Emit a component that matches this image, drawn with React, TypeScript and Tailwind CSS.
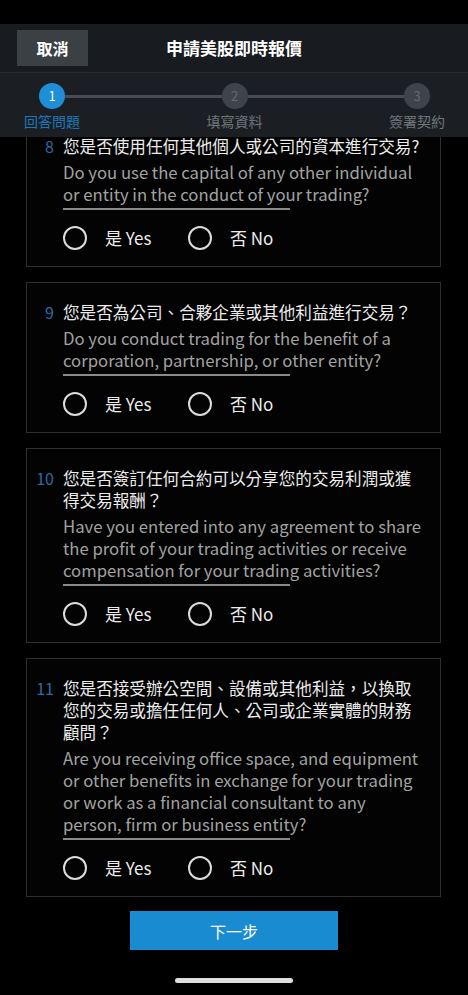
import React from "react";

const font = { fontFamily: '"Noto Sans CJK TC", "Noto Sans", sans-serif' };

type Q = { n: string; zh: string[]; en: string[] };

const questions: Q[] = [
  {
    n: "8",
    zh: ["您是否使用任何其他個人或公司的資本進行交易?"],
    en: ["Do you use the capital of any other individual", "or entity in the conduct of your trading?"],
  },
  {
    n: "9",
    zh: ["您是否為公司、合夥企業或其他利益進行交易？"],
    en: ["Do you conduct trading for the benefit of a", "corporation, partnership, or other entity?"],
  },
  {
    n: "10",
    zh: ["您是否簽訂任何合約可以分享您的交易利潤或獲", "得交易報酬？"],
    en: [
      "Have you entered into any agreement to share",
      "the profit of your trading activities or receive",
      "compensation for your trading activities?",
    ],
  },
  {
    n: "11",
    zh: ["您是否接受辦公空間、設備或其他利益，以換取", "您的交易或擔任任何人、公司或企業實體的財務", "顧問？"],
    en: [
      "Are you receiving office space, and equipment",
      "or other benefits in exchange for your trading",
      "or work as a financial consultant to any",
      "person, firm or business entity?",
    ],
  },
];

function Radio({ label }: { label: string }) {
  return (
    <div className="flex items-center">
      <div className="h-[24px] w-[24px] rounded-full border-2 border-[#dcdcdc]" />
      <span className="ml-[18px] text-[17px] leading-[24px] text-[#ececec]">{label}</span>
    </div>
  );
}

function Card({ q }: { q: Q }) {
  return (
    <div className="border border-[#2f2f2f] bg-[#030303] pt-[18px] pb-[16px] pl-[8px] pr-[14px]">
      <div className="flex">
        <div className="w-[19px] shrink-0 text-right text-[16px] leading-[22px] text-[#2c6ba3]">{q.n}</div>
        <div className="ml-[9px] flex-1">
          <div className="text-[16.6px] leading-[22px] text-[#ececec]">
            {q.zh.map((l, i) => (
              <div key={i} className="whitespace-nowrap">{l}</div>
            ))}
          </div>
          <div className="mt-[4px] text-[16.7px] leading-[22px] text-[#a2a2a2]">
            {q.en.map((l, i) => (
              <div key={i} className="whitespace-nowrap">{l}</div>
            ))}
          </div>
          <div className="mt-[3px] h-[2px] w-[227px] bg-[#8a8a8a]" />
          <div className="mt-[16px] flex items-center">
            <div className="w-[125px]">
              <Radio label="是 Yes" />
            </div>
            <Radio label="否 No" />
          </div>
        </div>
      </div>
    </div>
  );
}

export default function App() {
  return (
    <div className="flex h-[995px] w-[468px] flex-col overflow-hidden bg-black" style={font}>
      <div className="h-[24px] shrink-0 bg-black" />
      <div className="relative flex h-[48px] shrink-0 items-center bg-[#181b1f]">
        <div className="ml-[17px] flex h-[36px] w-[71px] items-center justify-center bg-[#3b4045] text-[16px] font-bold text-white">
          取消
        </div>
        <div className="absolute left-0 right-0 top-0 flex h-[48px] items-center justify-center pointer-events-none">
          <span className="text-[17px] font-bold text-white">申請美股即時報價</span>
        </div>
      </div>
      <div className="h-[1px] shrink-0 bg-[#272b30]" />
      <div className="h-[64px] shrink-0 bg-[#1b1f24] pt-[10px]">
        <div className="flex items-center pl-[39px] pr-[38px]">
          <div className="flex h-[26px] w-[26px] items-center justify-center rounded-full bg-[#1e8fd6] text-[13px] text-white">1</div>
          <div className="h-[3px] flex-1 bg-[#464c52]" />
          <div className="flex h-[26px] w-[26px] items-center justify-center rounded-full bg-[#3e444a] text-[13px] text-[#646a70]">2</div>
          <div className="h-[3px] flex-1 bg-[#464c52]" />
          <div className="flex h-[26px] w-[26px] items-center justify-center rounded-full bg-[#3e444a] text-[13px] text-[#646a70]">3</div>
        </div>
        <div className="mt-[2px] flex justify-between pl-[24px] pr-[23px] text-[14px] leading-[20px]">
          <span className="text-[#1d78b8]">回答問題</span>
          <span className="text-[#6f757b]">填寫資料</span>
          <span className="text-[#6f757b]">簽署契約</span>
        </div>
      </div>
      <div className="flex-1 overflow-hidden">
        <div className="-mt-[21px] flex flex-col gap-[15px] pl-[26px] pr-[27px]">
          {questions.map((q) => (
            <Card key={q.n} q={q} />
          ))}
        </div>
        <div className="mt-[14px] flex justify-center">
          <div className="flex h-[39px] w-[208px] items-center justify-center bg-[#198bd0] text-[16px] text-white">
            下一步
          </div>
        </div>
        <div className="mt-[28px] flex justify-center">
          <div className="h-[5px] w-[118px] rounded-full bg-[#dedede]" />
        </div>
      </div>
    </div>
  );
}
